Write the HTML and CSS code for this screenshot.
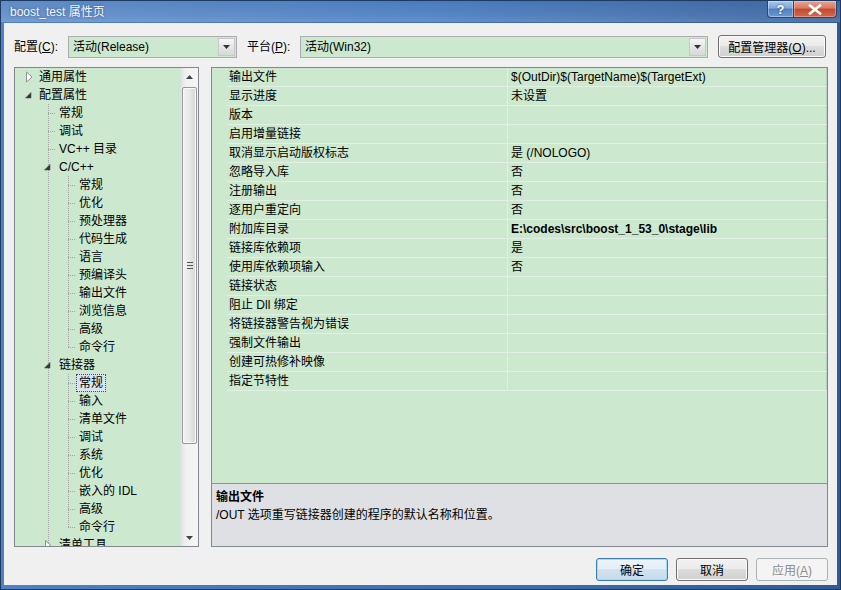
FILE: index.html
```html
<!DOCTYPE html>
<html lang="zh-CN">
<head>
    <meta charset="UTF-8">
    <title>boost_test 属性页</title>
    <link rel="stylesheet" href="styles.css">
</head>
<body>
<div class="window">
    <div class="titlebar">
        <span class="title">boost_test 属性页</span>
        <div class="caption-buttons">
            <span class="cap-btn help">?</span>
            <span class="cap-btn close">
                <svg width="14" height="11" viewBox="0 0 14 11"><path d="M2 1.5 L12 9.5 M12 1.5 L2 9.5" stroke="#fff" stroke-width="2.6" stroke-linecap="square"/></svg>
            </span>
        </div>
    </div>

    <div class="client">
        <div class="toolbar">
            <span class="tb-label">配置(<u>C</u>):</span>
            <div class="combo combo-config">
                <span class="combo-text">活动(Release)</span>
                <span class="combo-arrow"><svg width="7" height="4" viewBox="0 0 7 4"><path d="M0 0 H7 L3.5 4 Z" fill="#333"/></svg></span>
            </div>
            <span class="tb-label platform-label">平台(<u>P</u>):</span>
            <div class="combo combo-platform">
                <span class="combo-text">活动(Win32)</span>
                <span class="combo-arrow"><svg width="7" height="4" viewBox="0 0 7 4"><path d="M0 0 H7 L3.5 4 Z" fill="#333"/></svg></span>
            </div>
            <button class="btn manager-btn">配置管理器(<u>O</u>)...</button>
        </div>

        <div class="main">
            <div class="tree-panel">
                <div class="tree">
                    <div class="node"><span class="col exp-closed"></span><span class="label">通用属性</span></div>
                    <div class="node"><span class="col exp-open"></span><span class="label">配置属性</span></div>
                    <div class="node"><span class="col"></span><span class="col tee"></span><span class="label">常规</span></div>
                    <div class="node"><span class="col"></span><span class="col tee"></span><span class="label">调试</span></div>
                    <div class="node"><span class="col"></span><span class="col tee"></span><span class="label">VC++ 目录</span></div>
                    <div class="node"><span class="col"></span><span class="col pipe exp-open"></span><span class="label">C/C++</span></div>
                    <div class="node"><span class="col"></span><span class="col pipe"></span><span class="col tee"></span><span class="label">常规</span></div>
                    <div class="node"><span class="col"></span><span class="col pipe"></span><span class="col tee"></span><span class="label">优化</span></div>
                    <div class="node"><span class="col"></span><span class="col pipe"></span><span class="col tee"></span><span class="label">预处理器</span></div>
                    <div class="node"><span class="col"></span><span class="col pipe"></span><span class="col tee"></span><span class="label">代码生成</span></div>
                    <div class="node"><span class="col"></span><span class="col pipe"></span><span class="col tee"></span><span class="label">语言</span></div>
                    <div class="node"><span class="col"></span><span class="col pipe"></span><span class="col tee"></span><span class="label">预编译头</span></div>
                    <div class="node"><span class="col"></span><span class="col pipe"></span><span class="col tee"></span><span class="label">输出文件</span></div>
                    <div class="node"><span class="col"></span><span class="col pipe"></span><span class="col tee"></span><span class="label">浏览信息</span></div>
                    <div class="node"><span class="col"></span><span class="col pipe"></span><span class="col tee"></span><span class="label">高级</span></div>
                    <div class="node"><span class="col"></span><span class="col pipe"></span><span class="col tee last"></span><span class="label">命令行</span></div>
                    <div class="node"><span class="col"></span><span class="col pipe exp-open"></span><span class="label">链接器</span></div>
                    <div class="node"><span class="col"></span><span class="col pipe"></span><span class="col tee"></span><span class="label selected">常规</span></div>
                    <div class="node"><span class="col"></span><span class="col pipe"></span><span class="col tee"></span><span class="label">输入</span></div>
                    <div class="node"><span class="col"></span><span class="col pipe"></span><span class="col tee"></span><span class="label">清单文件</span></div>
                    <div class="node"><span class="col"></span><span class="col pipe"></span><span class="col tee"></span><span class="label">调试</span></div>
                    <div class="node"><span class="col"></span><span class="col pipe"></span><span class="col tee"></span><span class="label">系统</span></div>
                    <div class="node"><span class="col"></span><span class="col pipe"></span><span class="col tee"></span><span class="label">优化</span></div>
                    <div class="node"><span class="col"></span><span class="col pipe"></span><span class="col tee"></span><span class="label">嵌入的 IDL</span></div>
                    <div class="node"><span class="col"></span><span class="col pipe"></span><span class="col tee"></span><span class="label">高级</span></div>
                    <div class="node"><span class="col"></span><span class="col pipe"></span><span class="col tee last"></span><span class="label">命令行</span></div>
                    <div class="node"><span class="col"></span><span class="col pipe exp-closed"></span><span class="label">清单工具</span></div>
                </div>
                <div class="vscroll">
                    <div class="sb-arrow"><svg width="7" height="4" viewBox="0 0 7 4"><path d="M0 4 H7 L3.5 0 Z" fill="#444"/></svg></div>
                    <div class="sb-track">
                        <div class="sb-thumb"><span class="grip"></span></div>
                    </div>
                    <div class="sb-arrow"><svg width="7" height="4" viewBox="0 0 7 4"><path d="M0 0 H7 L3.5 4 Z" fill="#444"/></svg></div>
                </div>
            </div>

            <div class="props-panel">
                <div class="grid">
                    <div class="row"><span class="gutter"></span><span class="name">输出文件</span><span class="value">$(OutDir)$(TargetName)$(TargetExt)</span></div>
                    <div class="row"><span class="gutter"></span><span class="name">显示进度</span><span class="value">未设置</span></div>
                    <div class="row"><span class="gutter"></span><span class="name">版本</span><span class="value"></span></div>
                    <div class="row"><span class="gutter"></span><span class="name">启用增量链接</span><span class="value"></span></div>
                    <div class="row"><span class="gutter"></span><span class="name">取消显示启动版权标志</span><span class="value">是 (/NOLOGO)</span></div>
                    <div class="row"><span class="gutter"></span><span class="name">忽略导入库</span><span class="value">否</span></div>
                    <div class="row"><span class="gutter"></span><span class="name">注册输出</span><span class="value">否</span></div>
                    <div class="row"><span class="gutter"></span><span class="name">逐用户重定向</span><span class="value">否</span></div>
                    <div class="row"><span class="gutter"></span><span class="name">附加库目录</span><span class="value changed">E:\codes\src\boost_1_53_0\stage\lib</span></div>
                    <div class="row"><span class="gutter"></span><span class="name">链接库依赖项</span><span class="value">是</span></div>
                    <div class="row"><span class="gutter"></span><span class="name">使用库依赖项输入</span><span class="value">否</span></div>
                    <div class="row"><span class="gutter"></span><span class="name">链接状态</span><span class="value"></span></div>
                    <div class="row"><span class="gutter"></span><span class="name">阻止 Dll 绑定</span><span class="value"></span></div>
                    <div class="row"><span class="gutter"></span><span class="name">将链接器警告视为错误</span><span class="value"></span></div>
                    <div class="row"><span class="gutter"></span><span class="name">强制文件输出</span><span class="value"></span></div>
                    <div class="row"><span class="gutter"></span><span class="name">创建可热修补映像</span><span class="value"></span></div>
                    <div class="row"><span class="gutter"></span><span class="name">指定节特性</span><span class="value"></span></div>
                </div>
                <div class="desc">
                    <div class="desc-title">输出文件</div>
                    <div class="desc-text">/OUT 选项重写链接器创建的程序的默认名称和位置。</div>
                </div>
            </div>
        </div>

        <div class="footer">
            <button class="btn default">确定</button>
            <button class="btn">取消</button>
            <button class="btn" disabled>应用(<u>A</u>)</button>
        </div>
    </div>
</div>
</body>
</html>
```

FILE: styles.css
```css
* {
    box-sizing: border-box;
}
body {
    margin: 0;
    font-family: "Liberation Sans", "Noto Sans CJK SC", sans-serif;
    font-size: 12px;
    color: #000;
}
.window {
    width: 841px;
    height: 590px;
    display: flex;
    flex-direction: column;
    background: linear-gradient(to right, #4f80c0, #3f6ead 60%, #2f5a93);
    border: 1px solid #1d3a63;
}

/* title bar */
.titlebar {
    height: 21px;
    display: flex;
    align-items: flex-start;
    background: linear-gradient(to right, rgba(255,255,255,0.12), rgba(0,0,0,0) 50%, rgba(0,0,20,0.18)),
                linear-gradient(#4a7cbd, #5887c6 70%, #6391cd);
}
.title {
    margin: 3px 0 0 9px;
    line-height: 16px;
    color: #f4f8fc;
    text-shadow: 0 0 3px rgba(20,40,80,0.6);
}
.caption-buttons {
    margin-left: auto;
    margin-right: 3px;
    display: flex;
}
.cap-btn {
    height: 17px;
    display: flex;
    align-items: center;
    justify-content: center;
    border: 1px solid #28466f;
    border-top: none;
    color: #fff;
    font-weight: bold;
    font-size: 13px;
}
.help {
    width: 27px;
    border-radius: 0 0 0 4px;
    background: linear-gradient(#a9c6ea, #7ea6d8 45%, #4f7fbe 50%, #6b9ad6);
    box-shadow: inset 0 0 0 1px rgba(255,255,255,0.35);
    text-shadow: 0 0 2px #1b3d6b;
}
.close {
    width: 43px;
    border-left: none;
    border-radius: 0 0 4px 0;
    background: linear-gradient(#e8a493, #d9785f 45%, #c24a2f 50%, #d36a4c);
    box-shadow: inset 0 0 0 1px rgba(255,255,255,0.3);
}

/* client area */
.client {
    flex: 1;
    margin: 1px 3px 4px 3px;
    padding: 12px 9px 0 10px;
    background: #f0f0f0;
    display: flex;
    flex-direction: column;
}
.toolbar {
    height: 23px;
    display: flex;
    align-items: center;
}
.tb-label {
    width: 54px;
    line-height: 16px;
}
.platform-label {
    width: 53px;
    margin-left: 10px;
}
.combo {
    height: 22px;
    display: flex;
    align-items: stretch;
    border: 1px solid #abadb3;
    background: #cce8cf;
}
.combo-config {
    width: 169px;
}
.combo-platform {
    width: 408px;
}
.combo-text {
    flex: 1;
    padding-left: 4px;
    line-height: 20px;
}
.combo-arrow {
    width: 17px;
    margin: 1px;
    display: flex;
    align-items: center;
    justify-content: center;
    border: 1px solid #c8c8c8;
    background: linear-gradient(#f6f6f6, #e6e6e6 50%, #d8d8d8);
}
.btn {
    height: 23px;
    width: 72px;
    padding: 0;
    font: inherit;
    color: #000;
    border: 1px solid #707070;
    border-radius: 3px;
    background: linear-gradient(#f2f2f2, #ebebeb 49%, #dddddd 50%, #cfcfcf);
    box-shadow: inset 0 0 0 1px #fbfbfb;
}
.manager-btn {
    width: 108px;
    margin-left: 10px;
}
.btn.default {
    border-color: #3c7fb1;
    background: linear-gradient(#eef5fa, #e2edf6 49%, #d2e2ef 50%, #c6dbec);
    box-shadow: inset 0 0 0 1px #9fdcf7;
}
.btn:disabled {
    color: #8d8d8d;
    border-color: #adb2b5;
    background: #f4f4f4;
    box-shadow: none;
}

/* main panes */
.main {
    margin-top: 9px;
    height: 480px;
    display: flex;
}
.tree-panel {
    width: 185px;
    display: flex;
    border: 1px solid #828790;
    background: #cce8cf;
}
.tree {
    flex: 1;
    overflow: hidden;
}
.node {
    height: 18px;
    display: flex;
    align-items: center;
    padding-left: 4px;
    white-space: nowrap;
}
.col {
    flex: 0 0 20px;
    height: 18px;
    background-repeat: no-repeat;
}
.pipe {
    background-image: repeating-linear-gradient(to bottom, #a3a3a3 0 1px, transparent 1px 2px);
    background-size: 1px 18px;
    background-position: 9px 0;
}
.tee {
    background-image: repeating-linear-gradient(to bottom, #a3a3a3 0 1px, transparent 1px 2px),
                      repeating-linear-gradient(to right, #a3a3a3 0 1px, transparent 1px 2px);
    background-size: 1px 18px, 8px 1px;
    background-position: 9px 0, 9px 9px;
}
.tee.last {
    background-size: 1px 10px, 8px 1px;
}
.exp-open {
    background-image: url("data:image/svg+xml,%3Csvg xmlns='http://www.w3.org/2000/svg' width='20' height='18'%3E%3Cpath d='M12 6.5 V12 H6.5 Z' fill='%23333' stroke='%23555' stroke-width='0.6'/%3E%3C/svg%3E");
}
.pipe.exp-open {
    background-image: url("data:image/svg+xml,%3Csvg xmlns='http://www.w3.org/2000/svg' width='20' height='18'%3E%3Cpath d='M11 6.5 V12 H5.5 Z' fill='%23333' stroke='%23555' stroke-width='0.6'/%3E%3C/svg%3E"),
                      repeating-linear-gradient(to bottom, #a3a3a3 0 1px, transparent 1px 2px);
    background-size: 20px 18px, 1px 18px;
    background-position: 0 0, 9px 0;
}
.exp-closed {
    background-image: url("data:image/svg+xml,%3Csvg xmlns='http://www.w3.org/2000/svg' width='20' height='18'%3E%3Cpath d='M7.5 4 L13 9 L7.5 14 Z' fill='%23fff' stroke='%23909090'/%3E%3C/svg%3E");
}
.pipe.exp-closed {
    background-image: url("data:image/svg+xml,%3Csvg xmlns='http://www.w3.org/2000/svg' width='20' height='18'%3E%3Cpath d='M6.5 4.5 L11.5 9 L6.5 13.5 Z' fill='%23fff' stroke='%23909090'/%3E%3C/svg%3E"),
                      repeating-linear-gradient(to bottom, #a3a3a3 0 1px, transparent 1px 2px);
    background-size: 20px 18px, 1px 9px;
    background-position: 0 0, 9px 0;
}
.label {
    margin-left: -3px;
    padding: 0 2px;
    line-height: 16px;
    border: 1px dotted transparent;
}
.label.selected {
    background: #d9e4f2;
    border-color: #4a4a4a;
}

/* tree scrollbar */
.vscroll {
    width: 17px;
    display: flex;
    flex-direction: column;
    background: linear-gradient(to right, #e3e3e3, #f1f1f1 30%, #f5f5f5);
}
.sb-arrow {
    height: 17px;
    display: flex;
    align-items: center;
    justify-content: center;
}
.sb-track {
    flex: 1;
    padding: 2px 1px 0 1px;
}
.sb-thumb {
    height: 357px;
    border: 1px solid #979797;
    border-radius: 2px;
    background: linear-gradient(to right, #f3f3f3, #e8e8e8 50%, #d6d6d6);
    box-shadow: inset 0 0 0 1px #fafafa;
    display: flex;
    align-items: center;
    justify-content: center;
}
.grip {
    width: 6px;
    height: 7px;
    background: repeating-linear-gradient(to bottom, #555 0 1px, transparent 1px 3px);
}

/* property grid */
.props-panel {
    flex: 1;
    margin-left: 12px;
    display: flex;
    flex-direction: column;
    border: 1px solid #828790;
}
.grid {
    flex: 1;
    background: #cce8cf;
}
.row {
    height: 19px;
    display: flex;
}
.gutter {
    width: 15px;
}
.name {
    width: 281px;
    padding-left: 2px;
    line-height: 18px;
    border-right: 1px solid #e2f0e4;
    border-bottom: 1px solid #e2f0e4;
    white-space: nowrap;
}
.value {
    flex: 1;
    padding-left: 3px;
    line-height: 18px;
    border-bottom: 1px solid #e2f0e4;
    border-right: 1px solid #b9cfbc;
    white-space: nowrap;
}
.value.changed {
    font-weight: bold;
}
.desc {
    height: 63px;
    padding: 4px 0 0 4px;
    border-top: 1px solid #8f9297;
    background: #dfe0e3;
}
.desc-title {
    font-weight: bold;
    line-height: 18px;
}
.desc-text {
    line-height: 18px;
}

/* bottom buttons */
.footer {
    margin-top: 11px;
    display: flex;
    justify-content: flex-end;
    gap: 8px;
}
```
